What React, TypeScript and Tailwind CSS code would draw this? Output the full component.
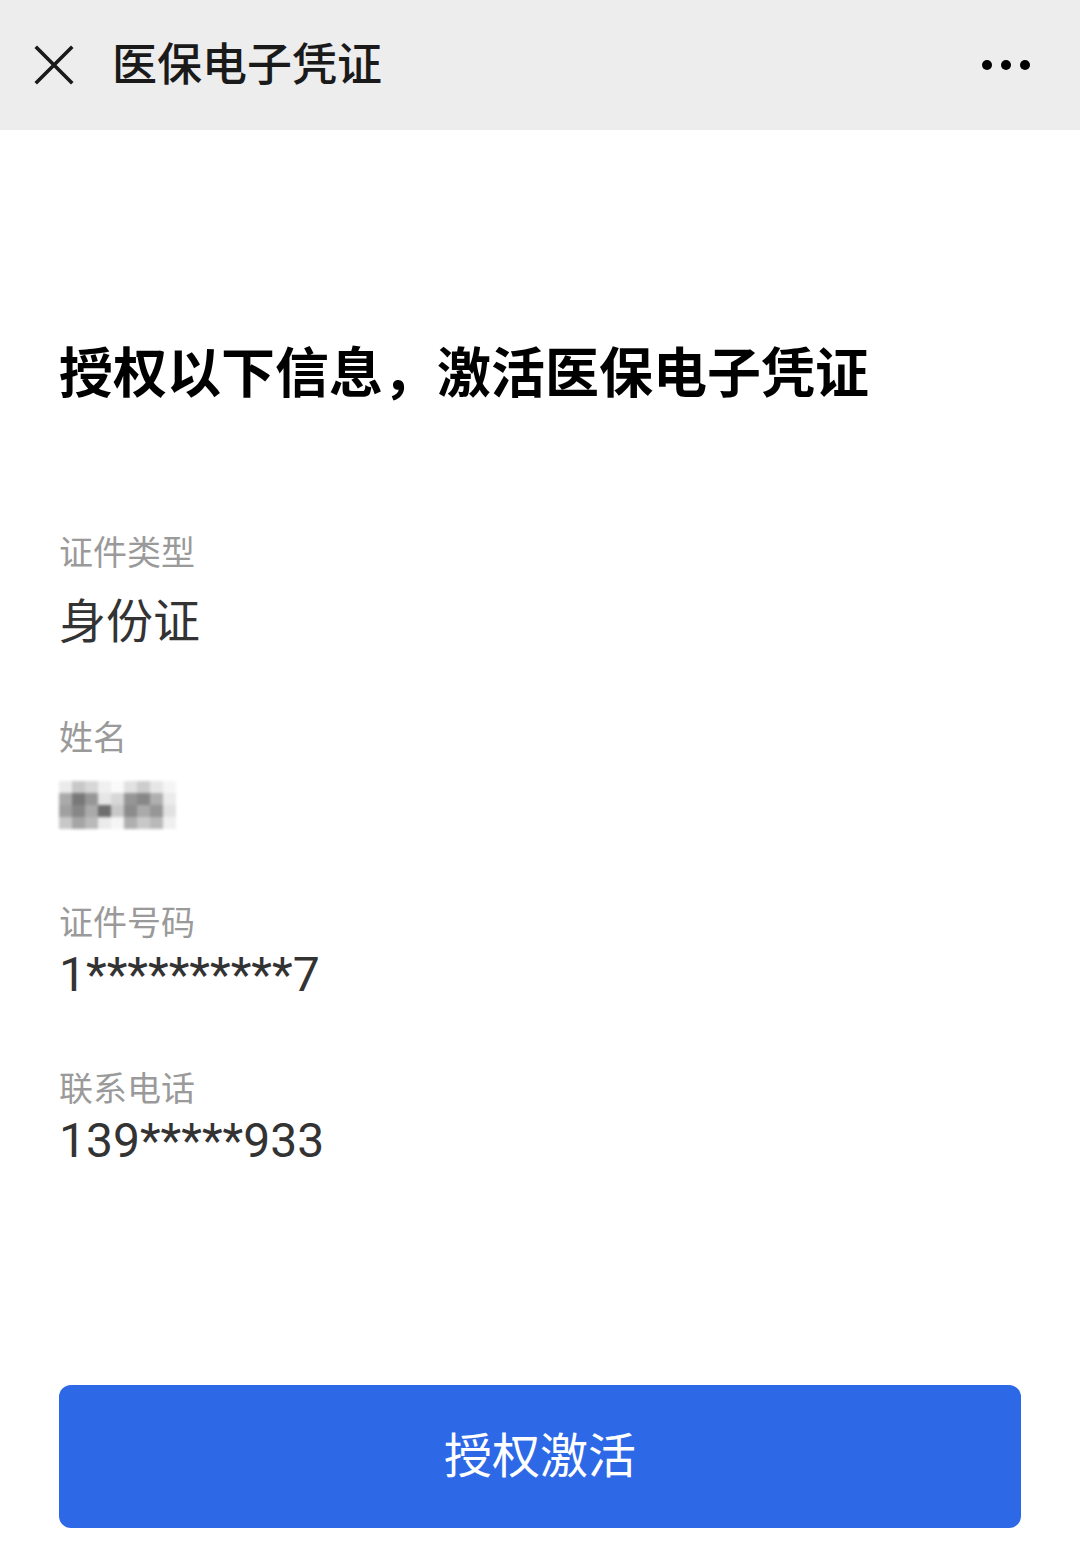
const fields = [
  { label: "证件类型", value: "身份证", kind: "text", gap: "" },
  { label: "姓名", value: "", kind: "blur", gap: "mt-[62px]" },
  { label: "证件号码", value: "1**********7", kind: "num", gap: "mt-[64px]" },
  { label: "联系电话", value: "139*****933", kind: "num", gap: "mt-[63px]" },
]

// pixelated name, rows of grey levels
const mosaic = [
  [235, 200, 215, 240, 250, 225, 205, 230, 245],
  [170, 120, 150, 230, 215, 150, 135, 175, 235],
  [160, 135, 170, 110, 200, 140, 170, 150, 225],
  [200, 165, 185, 235, 245, 175, 200, 185, 240],
]

function BlurredName() {
  return (
    <div className="flex h-[60px] flex-col justify-center">
      <div className="flex flex-col blur-[1.5px]">
        {mosaic.map((row, r) => (
          <div key={r} className="flex">
            {row.map((g, c) => (
              <div
                key={c}
                className="h-[12px] w-[13px]"
                style={{ backgroundColor: `rgb(${g},${g},${g})` }}
              />
            ))}
          </div>
        ))}
      </div>
    </div>
  )
}

export default function App() {
  return (
    <div className="flex h-[1546px] w-[1080px] flex-col bg-white font-['Roboto','Noto_Sans_CJK_SC',sans-serif]">
      <header className="flex h-[130px] flex-none items-center bg-[#ededed] pl-[34px] pr-[50px]">
        <svg width="40" height="40" viewBox="0 0 40 40" className="flex-none">
          <path d="M3 3 L37 37 M37 3 L3 37" stroke="#1a1a1a" strokeWidth="3.6" strokeLinecap="square" />
        </svg>
        <h1 className="ml-[38px] text-[45px] leading-none font-medium text-[#1a1a1a]">医保电子凭证</h1>
        <div className="ml-auto flex items-center gap-[9px]">
          <span className="h-[10px] w-[10px] rounded-full bg-black" />
          <span className="h-[10px] w-[10px] rounded-full bg-black" />
          <span className="h-[10px] w-[10px] rounded-full bg-black" />
        </div>
      </header>

      <main className="flex flex-1 flex-col px-[59px]">
        <h2 className="mt-[207px] text-[54px] leading-[76px] font-bold text-black">
          授权以下信息，激活医保电子凭证
        </h2>

        <div className="mt-[116px] flex flex-col">
          {fields.map((f) => (
            <div key={f.label} className={f.gap}>
              <p className="text-[34px] leading-[48px] text-[#9a9a9a]">{f.label}</p>
              {f.kind === "text" && (
                <p className="mt-[15px] text-[47px] leading-[60px] text-[#333333]">{f.value}</p>
              )}
              {f.kind === "blur" && (
                <div className="mt-[13px]">
                  <BlurredName />
                </div>
              )}
              {f.kind === "num" && (
                <p className="mt-[1px] text-[48px] leading-[54px] text-[#333333]">{f.value}</p>
              )}
            </div>
          ))}
        </div>

        <button className="mt-auto mb-[18px] flex h-[143px] w-full items-center justify-center rounded-[12px] bg-[#2d68e6] text-[48px] text-white">
          授权激活
        </button>
      </main>
    </div>
  )
}
